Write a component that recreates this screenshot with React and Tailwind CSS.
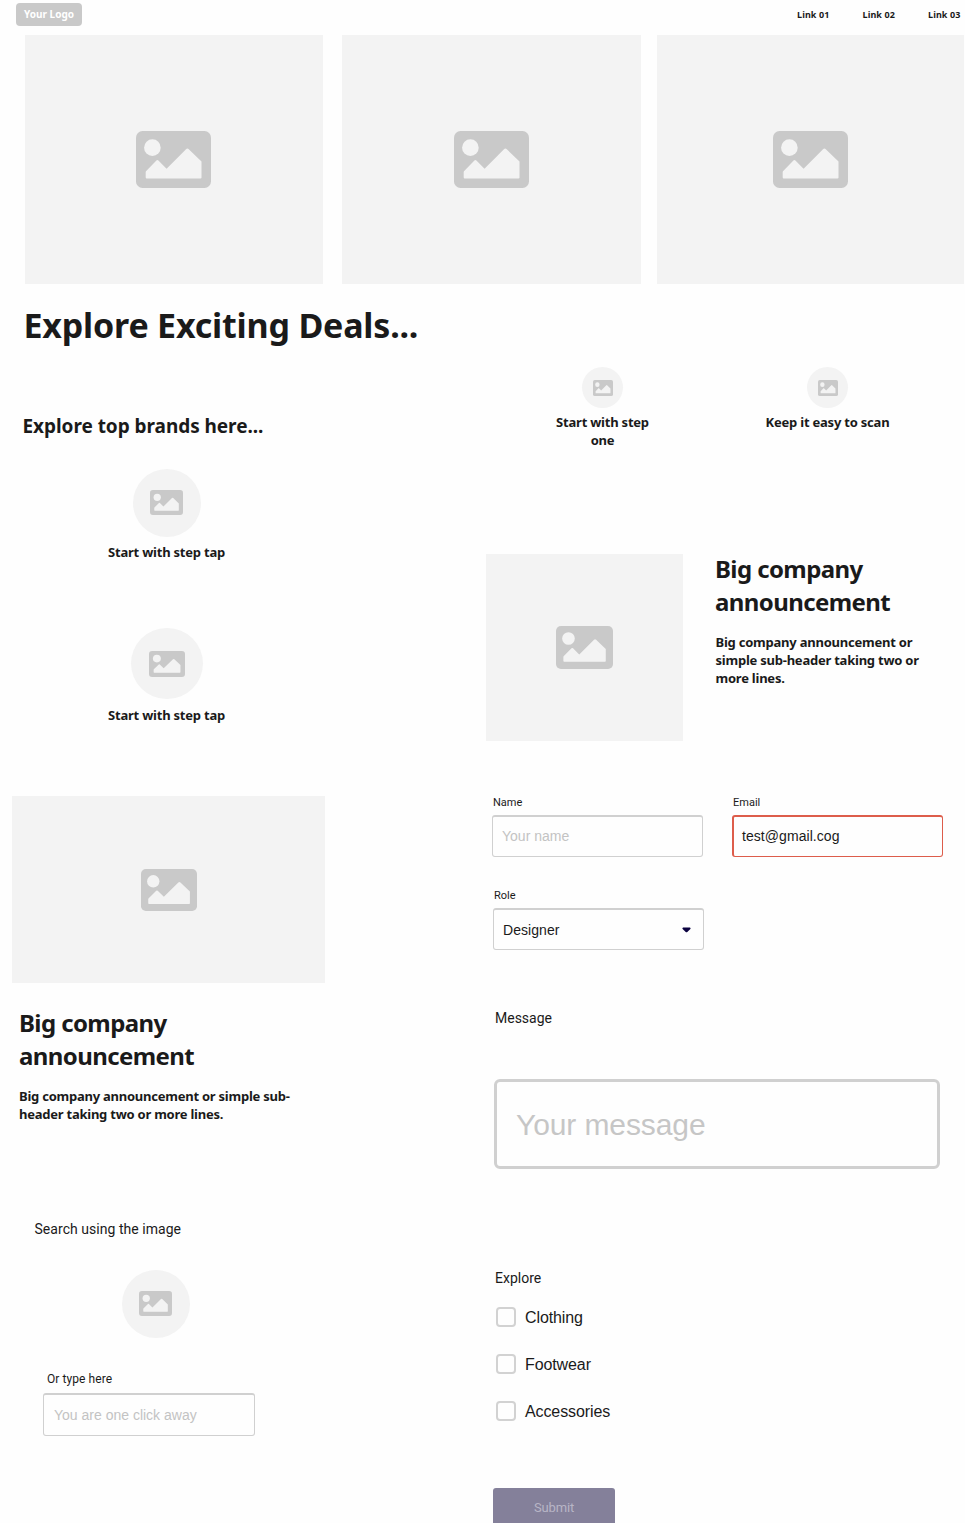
import React from "react";

const noto = "font-['Noto_Sans',sans-serif]";
const roboto = "font-[Roboto,sans-serif]";
const arial = "font-['Liberation_Sans',Arial,sans-serif]";

function Picture({ className }) {
  return (
    <svg viewBox="0 0 75 56.5" preserveAspectRatio="none" className={`block shrink-0 ${className}`}>
      <rect width="75" height="56.5" rx="6.5" fill="#c9c9c9" />
      <circle cx="16.4" cy="16.5" r="8.3" fill="#f3f3f3" />
      <path
        d="M10 39.8 20.4 29.3q1-1 2 0L30.6 37.4 50 18.1q1.4-1.3 2.8 0L65.5 30.3V46q0 1-1 1H10.7q-1 0-1-1V40.6z"
        fill="#f3f3f3"
      />
    </svg>
  );
}

function Placeholder({ className, icon }) {
  return (
    <div className={`flex shrink-0 items-center justify-center bg-[#f3f3f3] ${className}`}>
      <Picture className={icon} />
    </div>
  );
}

function Caption({ children, className = "" }) {
  return (
    <p className={`${noto} text-center text-[13px] leading-[18px] font-bold tracking-[-0.22px] ${className}`}>{children}</p>
  );
}

function CheckRow({ label }) {
  return (
    <label className="flex h-5 items-center gap-[9px]">
      <span className="size-5 rounded-[4px] border-2 border-[#d2d2d2]" />
      <span className={`${arial} pt-0.5 text-[16px] leading-5 tracking-[-0.1px]`}>{label}</span>
    </label>
  );
}

function Field({ label, children }) {
  return (
    <div className="flex w-[211px] flex-col gap-[5px]">
      <span className={`${roboto} pl-px text-[11px] leading-[14px]`}>{label}</span>
      {children}
    </div>
  );
}

export default function App() {
  return (
    <div className="flex h-[1523px] w-[965px] flex-col overflow-hidden bg-[#fefefe] text-[#1a1a1a]">
      <header className={`${noto} flex h-[35px] shrink-0 items-start justify-between pr-[4.5px] pl-4 font-bold`}>
        <div className="mt-[3px] flex h-[23px] w-[66px] items-center justify-center rounded-[4px] bg-[#c9c9c9] text-[10px] text-white">
          Your Logo
        </div>
        <nav className="mt-2 flex gap-[33px] text-[9px] leading-[14px] tracking-[0.1px]">
          <span>Link 01</span>
          <span>Link 02</span>
          <span>Link 03</span>
        </nav>
      </header>

      <section className="flex h-[249px] shrink-0 pl-[25px]">
        <Placeholder className="h-full w-[298px] pr-[2px]" icon="h-[57px] w-[75px]" />
        <Placeholder className="ml-[19px] h-full w-[299px] pr-px" icon="h-[57px] w-[75px]" />
        <Placeholder className="ml-4 h-full w-[307px]" icon="h-[57px] w-[75px]" />
      </section>

      <main className="flex flex-1">
        <div className="flex w-[486px] shrink-0 flex-col items-start">
          <h1 className={`${noto} mt-[18px] ml-[23.5px] text-[34px] leading-[46px] font-bold tracking-[-0.2px] whitespace-nowrap`}>
            Explore Exciting Deals...
          </h1>
          <h2 className={`${noto} mt-[65px] ml-[22.5px] text-[19px] leading-[26px] font-bold tracking-[-0.05px] whitespace-nowrap`}>
            Explore top brands here...
          </h2>
          <div className="mt-[30px] flex w-[333px] flex-col items-center">
            <Placeholder className="size-[68px] rounded-full pb-px" icon="h-[25px] w-[33px]" />
            <Caption className="mt-1.5">Start with step tap</Caption>
            <Placeholder className="mt-[67px] h-[71px] w-[72px] rounded-full" icon="h-[26px] w-[36px]" />
            <Caption className="mt-[7px]">Start with step tap</Caption>
          </div>
          <Placeholder className="mt-[72px] ml-3 h-[187px] w-[313px] pl-px" icon="h-[42px] w-[56px]" />
          <h2 className={`${noto} mt-[23px] ml-[19px] w-[250px] text-[24px] leading-[33px] font-bold tracking-[-0.6px]`}>
            Big company announcement
          </h2>
          <p className={`${noto} mt-[15px] ml-[19px] w-[285px] text-[13px] leading-[18px] font-bold tracking-[-0.24px]`}>
            Big company announcement or simple sub-header taking two or more lines.
          </p>
          <p className={`${roboto} mt-24 ml-[34.5px] text-[14px] leading-5 tracking-[0.04px]`}>Search using the image</p>
          <Placeholder className="mt-[31px] ml-[122px] size-[68px] rounded-full pr-px pb-px" icon="h-[25px] w-[33px]" />
          <p className={`${roboto} mt-[33px] ml-[47px] text-[12px] leading-4 tracking-[0.08px]`}>Or type here</p>
          <div className={`${arial} mt-1.5 ml-[43px] flex h-[43px] w-[212px] items-center rounded-[3px] border border-t-2 border-[#d0d0d0] pl-2.5 text-[14px] text-[#c3c3c3]`}>
            You are one click away
          </div>
        </div>

        <div className="flex w-[479px] flex-col items-start">
          <div className="mt-[83px] ml-1 flex h-[187px] items-start">
            <div className="flex w-[225px] flex-col items-center">
              <Placeholder className="size-[41px] rounded-full" icon="h-[16px] w-5" />
              <Caption className="mt-[5px] w-[110px]">Start with step one</Caption>
            </div>
            <div className="flex w-[225px] flex-col items-center">
              <Placeholder className="size-[41px] rounded-full" icon="h-[16px] w-5" />
              <Caption className="mt-[5px]">Keep it easy to scan</Caption>
            </div>
          </div>

          <div className="flex h-[187px] items-start">
            <Placeholder className="h-[187px] w-[197px]" icon="h-[43px] w-[57px]" />
            <div className={`${noto} -mt-[2px] ml-8`}>
              <h2 className="w-[220px] text-[24px] leading-[33px] font-bold tracking-[-0.6px]">Big company announcement</h2>
              <p className="mt-[16px] ml-[0.5px] w-[215px] text-[13px] leading-[17.8px] font-bold tracking-[-0.23px]">
                Big company announcement or simple sub-header taking two or more lines.
              </p>
            </div>
          </div>

          <div className="mt-[55px] ml-1.5 flex gap-[29px]">
            <Field label="Name">
              <div className={`${arial} flex h-[42px] items-center rounded-[3px] border border-t-2 border-[#d0d0d0] pl-[9px] text-[14px] text-[#c3c3c3]`}>
                Your name
              </div>
            </Field>
            <Field label="Email">
              <div className={`${arial} flex h-[42px] items-center rounded-[3px] border border-t-2 border-l-2 border-[#dd5d4b] pl-[8px] text-[14px] tracking-[0.06px]`}>
                test@gmail.cog
              </div>
            </Field>
          </div>
          <div className="mt-[32px] ml-[7px]">
            <Field label="Role">
              <div className={`${arial} flex h-[42px] items-center justify-between rounded-[3px] border border-t-2 border-[#d0d0d0] pt-px pr-3 pl-[9px] text-[14px] tracking-[0.06px]`}>
                Designer
                <svg viewBox="0 0 9 6" className="h-1.5 w-[9px]">
                  <path d="M1 .5h7Q9 1 8.400 2L5.300 5q-.8.7-1.600 0L.6 2Q0 1 1 .5z" fill="#0b0240" />
                </svg>
              </div>
            </Field>
          </div>

          <p className={`${roboto} mt-[58px] ml-[9px] text-[14px] leading-5`}>Message</p>
          <div className={`${arial} mt-[51px] ml-2 flex h-[90px] w-[446px] items-center rounded-[6px] border-[3px] border-[#d0d0d0] pl-[19px] text-[30px] tracking-[-0.1px] text-[#c6c6c6]`}>
            Your message
          </div>

          <p className={`${roboto} mt-[99px] ml-[9px] text-[14px] leading-5`}>Explore</p>
          <div className="mt-[19px] ml-2.5 flex flex-col gap-[27px]">
            <CheckRow label="Clothing" />
            <CheckRow label="Footwear" />
            <CheckRow label="Accessories" />
          </div>
          <div className={`${roboto} mt-[67px] ml-[7px] flex h-[35px] w-[122px] items-center justify-center rounded-t-[3px] bg-[#84809a] pt-1 text-[13px] tracking-[-0.15px] text-[#b8b5c6]`}>
            Submit
          </div>
        </div>
      </main>
    </div>
  );
}
